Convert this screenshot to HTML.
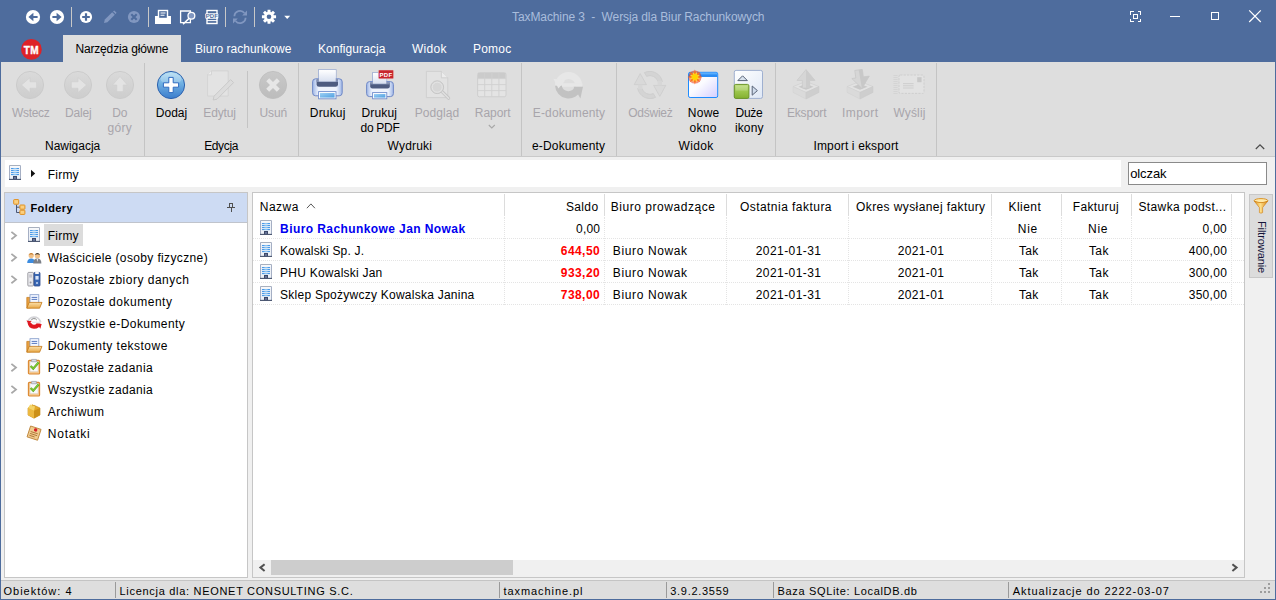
<!DOCTYPE html>
<html lang="pl"><head><meta charset="utf-8"><title>TaxMachine 3 - Wersja dla Biur Rachunkowych</title>
<style>
html,body{margin:0;padding:0;}
body{width:1276px;height:600px;position:relative;overflow:hidden;background:#f0f0f0;font-family:'Liberation Sans', sans-serif;}
#app div,#app svg,#app span.t{position:absolute;}
#app span.t{white-space:pre;}
#app{position:absolute;left:0;top:0;width:1276px;height:600px;overflow:hidden;}
</style></head><body><div id="app">
<div style="left:0px;top:0px;width:1276px;height:600px;background:#4e6c9d;"></div>
<div style="left:1px;top:62px;width:1274px;height:95px;background:#dedede;"></div>
<div style="left:1px;top:156px;width:1274px;height:1px;background:#c9c9c9;"></div>
<div style="left:1px;top:157px;width:1274px;height:423px;background:#f0f0f0;"></div>
<div style="left:63px;top:35px;width:118px;height:27px;background:#dedede;"></div>
<div style="left:144px;top:63px;width:1px;height:93px;background:#c4c4c4;"></div>
<div style="left:298px;top:63px;width:1px;height:93px;background:#c4c4c4;"></div>
<div style="left:521px;top:63px;width:1px;height:93px;background:#c4c4c4;"></div>
<div style="left:616px;top:63px;width:1px;height:93px;background:#c4c4c4;"></div>
<div style="left:775px;top:63px;width:1px;height:93px;background:#c4c4c4;"></div>
<div style="left:936px;top:63px;width:1px;height:93px;background:#c4c4c4;"></div>
<div style="left:247px;top:71px;width:1px;height:57px;background:#c4c4c4;"></div>
<div style="left:5px;top:160px;width:1116px;height:27px;background:#ffffff;"></div>
<div style="left:1128px;top:162px;width:139px;height:23px;background:#ffffff;box-sizing:border-box;border:1px solid #8a8a8a;"></div>
<div style="left:4px;top:192px;width:244px;height:386px;background:#ffffff;box-sizing:border-box;border:1px solid #c6c6c6;"></div>
<div style="left:5px;top:193px;width:242px;height:29px;background:#cddbf3;"></div>
<div style="left:5px;top:222px;width:242px;height:1px;background:#c0c4cc;"></div>
<div style="left:44px;top:224px;width:39px;height:22px;background:#dcdcdc;"></div>
<div style="left:252px;top:192px;width:993px;height:386px;background:#ffffff;box-sizing:border-box;border:1px solid #c6c6c6;"></div>
<div style="left:504px;top:194px;width:1px;height:22px;background:#dcdcdc;"></div>
<div style="left:504px;top:217px;width:1px;height:88px;background:none;border-left:1px dotted #e4e4e4;"></div>
<div style="left:604px;top:194px;width:1px;height:22px;background:#dcdcdc;"></div>
<div style="left:604px;top:217px;width:1px;height:88px;background:none;border-left:1px dotted #e4e4e4;"></div>
<div style="left:726px;top:194px;width:1px;height:22px;background:#dcdcdc;"></div>
<div style="left:726px;top:217px;width:1px;height:88px;background:none;border-left:1px dotted #e4e4e4;"></div>
<div style="left:848px;top:194px;width:1px;height:22px;background:#dcdcdc;"></div>
<div style="left:848px;top:217px;width:1px;height:88px;background:none;border-left:1px dotted #e4e4e4;"></div>
<div style="left:991px;top:194px;width:1px;height:22px;background:#dcdcdc;"></div>
<div style="left:991px;top:217px;width:1px;height:88px;background:none;border-left:1px dotted #e4e4e4;"></div>
<div style="left:1061px;top:194px;width:1px;height:22px;background:#dcdcdc;"></div>
<div style="left:1061px;top:217px;width:1px;height:88px;background:none;border-left:1px dotted #e4e4e4;"></div>
<div style="left:1131px;top:194px;width:1px;height:22px;background:#dcdcdc;"></div>
<div style="left:1131px;top:217px;width:1px;height:88px;background:none;border-left:1px dotted #e4e4e4;"></div>
<div style="left:1231px;top:194px;width:1px;height:22px;background:#dcdcdc;"></div>
<div style="left:1231px;top:217px;width:1px;height:88px;background:none;border-left:1px dotted #e4e4e4;"></div>
<div style="left:253px;top:238px;width:991px;height:1px;background:none;border-top:1px dotted #e4e4e4;"></div>
<div style="left:253px;top:260px;width:991px;height:1px;background:none;border-top:1px dotted #e4e4e4;"></div>
<div style="left:253px;top:282px;width:991px;height:1px;background:none;border-top:1px dotted #e4e4e4;"></div>
<div style="left:253px;top:304px;width:991px;height:1px;background:none;border-top:1px dotted #e4e4e4;"></div>
<div style="left:253px;top:560px;width:991px;height:17px;background:#f0f0f0;"></div>
<div style="left:271px;top:560px;width:242px;height:15px;background:#cdcdcd;"></div>
<div style="left:1249px;top:194px;width:24px;height:84px;background:#dcdcdc;box-sizing:border-box;border:1px solid #c8c8c8;"></div>
<div style="left:1px;top:580px;width:1274px;height:1px;background:#c4c4c4;"></div>
<div style="left:1px;top:581px;width:1274px;height:18px;background:#dedede;"></div>
<div style="left:115px;top:582px;width:1px;height:16px;background:#9a9a9a;"></div>
<div style="left:499px;top:582px;width:1px;height:16px;background:#9a9a9a;"></div>
<div style="left:666px;top:582px;width:1px;height:16px;background:#9a9a9a;"></div>
<div style="left:773px;top:582px;width:1px;height:16px;background:#9a9a9a;"></div>
<div style="left:1008px;top:582px;width:1px;height:16px;background:#9a9a9a;"></div>
<div style="left:71px;top:7px;width:1px;height:20px;background:#c8c8c8;"></div>
<div style="left:148px;top:7px;width:1px;height:20px;background:#c8c8c8;"></div>
<div style="left:225px;top:7px;width:1px;height:20px;background:#c8c8c8;"></div>
<div style="left:254px;top:7px;width:1px;height:20px;background:#c8c8c8;"></div>
<div style="left:1170px;top:16px;width:10px;height:1px;background:#ffffff;"></div>
<div style="left:1211px;top:12px;width:8px;height:8px;background:none;box-sizing:border-box;border:1px solid #ffffff;"></div>
<svg style="left:25px;top:9px;" width="16" height="16" viewBox="0 0 16 16"><circle cx="8" cy="8" r="7.1" fill="#ffffff"/><path d="M3.4 8L8.4 3.8V6.9H12.6V9.1H8.4V12.2Z" fill="#4e6c9d"/></svg>
<svg style="left:49px;top:9px;" width="16" height="16" viewBox="0 0 16 16"><circle cx="8" cy="8" r="7.1" fill="#ffffff"/><path d="M12.6 8L7.6 3.8V6.9H3.4V9.1H7.6V12.2Z" fill="#4e6c9d"/></svg>
<svg style="left:79px;top:10px;" width="14" height="14" viewBox="0 0 14 14"><circle cx="7" cy="7" r="6.1" fill="#ffffff"/><path d="M7 3.2V10.8M3.2 7H10.8" stroke="#4e6c9d" stroke-width="2.2"/></svg>
<svg style="left:103px;top:10px;" width="14" height="14" viewBox="0 0 14 14"><path d="M9.2 2.2L11.8 4.8L4.4 12.2L1 13L1.8 9.6Z" fill="#8197c0"/><path d="M10 1.4L11.2 0.4L13.6 2.8L12.6 4Z" fill="#8197c0"/></svg>
<svg style="left:127px;top:10px;" width="14" height="14" viewBox="0 0 14 14"><circle cx="7" cy="7" r="6.1" fill="#8197c0"/><path d="M4.3 4.3L9.7 9.7M9.7 4.3L4.3 9.7" stroke="#4e6c9d" stroke-width="2.1"/></svg>
<svg style="left:154px;top:9px;" width="18" height="16" viewBox="0 0 18 16"><rect x="1" y="7" width="16" height="8" fill="#ffffff"/><rect x="4.5" y="1.5" width="9" height="8" fill="#4e6c9d" stroke="#ffffff" stroke-width="1.4"/><path d="M6.5 4H11.5M6.5 6.2H10.5" stroke="#ffffff" stroke-width="1.1"/></svg>
<svg style="left:179px;top:9px;" width="18" height="16" viewBox="0 0 18 16"><path d="M1.6 2H11.4V13.6H1.6Z" fill="none" stroke="#ffffff" stroke-width="1.3"/><circle cx="12.4" cy="6.8" r="3.4" fill="#8197c0" stroke="#ffffff" stroke-width="1.3"/><path d="M10 9.4L4 15.2" stroke="#ffffff" stroke-width="1.5"/></svg>
<svg style="left:204px;top:9px;" width="16" height="16" viewBox="0 0 16 16"><rect x="3" y="1.5" width="10" height="13" fill="none" stroke="#ffffff" stroke-width="1.4"/><rect x="1.3" y="4.2" width="13" height="5.6" rx="1" fill="#ffffff"/><text x="7.8" y="9.2" font-family="Liberation Sans, sans-serif" font-size="6" font-weight="700" fill="#4e6c9d" text-anchor="middle" style="text-rendering:geometricPrecision">PDF</text><path d="M3 11.6H13" stroke="#ffffff" stroke-width="1"/></svg>
<svg style="left:232px;top:9px;" width="16" height="16" viewBox="0 0 16 16"><path d="M2.4 7.2A5.6 5.6 0 0 1 12.4 4" fill="none" stroke="#8197c0" stroke-width="1.8"/><path d="M13.6 8.8A5.6 5.6 0 0 1 3.6 12" fill="none" stroke="#8197c0" stroke-width="1.8"/><path d="M15 1.6V6.4H10.2Z" fill="#8197c0"/><path d="M1 14.4V9.6H5.8Z" fill="#8197c0"/></svg>
<svg style="left:261px;top:9px;" width="16" height="16" viewBox="0 0 16 16"><path d="M15.06 6.37L15.06 9.23L12.75 9.37L12.47 10.04L14.00 11.78L11.98 13.80L10.24 12.27L9.57 12.55L9.43 14.86L6.57 14.86L6.43 12.55L5.76 12.27L4.02 13.80L2.00 11.78L3.53 10.04L3.25 9.37L0.94 9.23L0.94 6.37L3.25 6.23L3.53 5.56L2.00 3.82L4.02 1.80L5.76 3.33L6.43 3.05L6.57 0.74L9.43 0.74L9.57 3.05L10.24 3.33L11.98 1.80L14.00 3.82L12.47 5.56L12.75 6.23Z" fill="#ffffff"/><circle cx="8" cy="7.8" r="2.3" fill="#4e6c9d"/></svg>
<svg style="left:284px;top:15px;" width="7" height="5" viewBox="0 0 7 5"><path d="M0.2 0.8H6.2L3.2 4Z" fill="#ffffff"/></svg>
<svg style="left:20px;top:38px;" width="23" height="23" viewBox="0 0 23 23"><circle cx="11.4" cy="11.4" r="10.4" fill="#de2228"/><text x="11.4" y="15.5" font-family="Liberation Sans, sans-serif" font-size="10" font-weight="700" fill="#fff" text-anchor="middle" letter-spacing="0.4" stroke="#fff" stroke-width="0.35">TM</text></svg>
<svg style="left:1129px;top:10px;" width="13" height="13" viewBox="0 0 13 13"><path shape-rendering="crispEdges" d="M1.5 4.5V1.5H4.5M8.5 1.5H11.5V4.5M11.5 8.5V11.5H8.5M4.5 11.5H1.5V8.5" fill="none" stroke="#ffffff" stroke-width="1"/><rect shape-rendering="crispEdges" x="4.5" y="4.5" width="4" height="4" fill="none" stroke="#ffffff" stroke-width="1"/></svg>
<svg style="left:1248px;top:9px;" width="14" height="14" viewBox="0 0 14 14"><path d="M1.2 1.4L12.8 13M12.8 1.4L1.2 13" stroke="#ffffff" stroke-width="1.2"/></svg>
<svg width="0" height="0" style="left:0;top:0"><defs>
<linearGradient id="gDis" x1="0" y1="0" x2="0" y2="1"><stop offset="0" stop-color="#dadada"/><stop offset="1" stop-color="#cdcdcd"/></linearGradient>
<linearGradient id="gDis2" x1="0" y1="0" x2="0" y2="1"><stop offset="0" stop-color="#c9c9c9"/><stop offset="1" stop-color="#bcbcbc"/></linearGradient>
<linearGradient id="gAdd" x1="0" y1="0" x2="0" y2="1"><stop offset="0" stop-color="#b4def2"/><stop offset="0.4" stop-color="#74b4e4"/><stop offset="1" stop-color="#3a7ccc"/></linearGradient>
<linearGradient id="gPrn" x1="0" y1="0" x2="1" y2="0"><stop offset="0" stop-color="#9fb6e6"/><stop offset="0.2" stop-color="#eef3fc"/><stop offset="0.8" stop-color="#eef3fc"/><stop offset="1" stop-color="#9fb6e6"/></linearGradient>
<linearGradient id="gPap" x1="0" y1="0" x2="0" y2="1"><stop offset="0" stop-color="#ffffff"/><stop offset="1" stop-color="#d8e0f0"/></linearGradient>
<linearGradient id="gTray" x1="0" y1="0" x2="1" y2="1"><stop offset="0" stop-color="#9ed0f4"/><stop offset="1" stop-color="#4f9fe0"/></linearGradient>
<linearGradient id="gWin" x1="0" y1="0" x2="1" y2="1"><stop offset="0" stop-color="#ffffff"/><stop offset="0.45" stop-color="#fbfbff"/><stop offset="1" stop-color="#d4ceff"/></linearGradient>
<linearGradient id="gGreen" x1="0" y1="0" x2="0" y2="1"><stop offset="0" stop-color="#bcdc7c"/><stop offset="0.5" stop-color="#9cc64c"/><stop offset="1" stop-color="#84b030"/></linearGradient>
<linearGradient id="gBig" x1="0" y1="0" x2="1" y2="1"><stop offset="0" stop-color="#ffffff"/><stop offset="1" stop-color="#dfe8f6"/></linearGradient>
<radialGradient id="gStar"><stop offset="0" stop-color="#ffe000"/><stop offset="0.35" stop-color="#ffc400"/><stop offset="0.6" stop-color="#f05a18"/><stop offset="1" stop-color="#e03020" stop-opacity="0.55"/></radialGradient>
<linearGradient id="gBld" x1="0" y1="0" x2="1" y2="0"><stop offset="0" stop-color="#c8d4e4"/><stop offset="0.5" stop-color="#f4f8fc"/><stop offset="1" stop-color="#b8c4d8"/></linearGradient>
<linearGradient id="gFold" x1="0" y1="0" x2="0" y2="1"><stop offset="0" stop-color="#fbe0a8"/><stop offset="1" stop-color="#e8a848"/></linearGradient>
<linearGradient id="gFun" x1="0" y1="0" x2="1" y2="0"><stop offset="0" stop-color="#e09018"/><stop offset="0.45" stop-color="#ffe08a"/><stop offset="1" stop-color="#d88410"/></linearGradient>
</defs></svg>
<svg style="left:15px;top:70px;" width="30" height="30" viewBox="0 0 30 30"><circle cx="15" cy="15" r="13.6" fill="url(#gDis)" stroke="#c9c9c9" stroke-width="0.9"/><path d="M6.5 15L15 7.6V11.8H21.6V18.2H15V22.4Z" fill="#e3e3e3" stroke="#cfcfcf" stroke-width="0.6"/></svg>
<svg style="left:63px;top:70px;" width="30" height="30" viewBox="0 0 30 30"><circle cx="15" cy="15" r="13.6" fill="url(#gDis)" stroke="#c9c9c9" stroke-width="0.9"/><path d="M23.5 15L15 7.6V11.8H8.4V18.2H15V22.4Z" fill="#e3e3e3" stroke="#cfcfcf" stroke-width="0.6"/></svg>
<svg style="left:105px;top:70px;" width="30" height="30" viewBox="0 0 30 30"><circle cx="15" cy="15" r="13.6" fill="url(#gDis)" stroke="#c9c9c9" stroke-width="0.9"/><path d="M15 6.5L22.4 15H18.2V21.6H11.8V15H7.6Z" fill="#e3e3e3" stroke="#cfcfcf" stroke-width="0.6"/></svg>
<svg style="left:156px;top:70px;" width="30" height="30" viewBox="0 0 30 30"><circle cx="15" cy="15" r="13.6" fill="url(#gAdd)" stroke="#2d62ae" stroke-width="1"/><ellipse cx="15" cy="9" rx="10.5" ry="6" fill="#ffffff" opacity="0.22"/><path d="M12.8 7.4H17.2V12.8H22.6V17.2H17.2V22.6H12.8V17.2H7.4V12.8H12.8Z" fill="#ffffff" stroke="#2f6cc0" stroke-width="1" stroke-linejoin="round"/></svg>
<svg style="left:205px;top:69px;" width="32" height="32" viewBox="0 0 32 32"><path d="M6.5 1.8H23.2V27H2.6V5.8Z" fill="#e3e3e3" stroke="#d0d0d0" stroke-width="0.8"/><path d="M6.5 1.8V5.8H2.6" fill="#ececec" stroke="#d0d0d0" stroke-width="0.8"/><path d="M25.6 10.6L28.6 13.6L12 30.2L8.2 31L9 27.2Z" fill="#dcdcdc" stroke="#c4c4c4" stroke-width="0.8"/></svg>
<svg style="left:258px;top:70px;" width="30" height="30" viewBox="0 0 30 30"><circle cx="15" cy="15" r="13.6" fill="url(#gDis2)" stroke="#bdbdbd" stroke-width="0.8"/><path d="M8.2 11.2L11.2 8.2L15 12L18.8 8.2L21.8 11.2L18 15L21.8 18.8L18.8 21.8L15 18L11.2 21.8L8.2 18.8L12 15Z" fill="#e6e6e6"/></svg>
<svg style="left:311.5px;top:69px;" width="31" height="31" viewBox="0 0 31 31"><rect x="6.5" y="0.7" width="17.6" height="13" fill="url(#gPap)" stroke="#9aaad0" stroke-width="0.9"/><rect x="0.6" y="9.8" width="29.6" height="17" rx="3" fill="url(#gPrn)" stroke="#6f88c6" stroke-width="1"/><path d="M4.6 10.6H26V15.4Q26 17.8 23.6 17.8H7Q4.6 17.8 4.6 15.4Z" fill="#4e5c80"/><path d="M4.6 10.6H26V13H4.6Z" fill="#8391b4"/><rect x="6.9" y="1.1" width="16.8" height="11.4" fill="url(#gPap)"/><rect x="6.6" y="22.6" width="17.4" height="7.2" fill="#ffffff" stroke="#6f8ccc" stroke-width="0.9"/><rect x="8" y="24" width="14.6" height="4.6" fill="url(#gTray)"/></svg>
<svg style="left:365.7px;top:69px;" width="29" height="31" viewBox="0 0 29 31"><rect x="6.5" y="3.7" width="14.2" height="12" fill="url(#gPap)" stroke="#9aaad0" stroke-width="0.9"/><rect x="0.6" y="12.6" width="26.8" height="15" rx="3" fill="url(#gPrn)" stroke="#6f88c6" stroke-width="1"/><path d="M4.2 13.4H23.8V17.2Q23.8 19.4 21.6 19.4H6.4Q4.2 19.4 4.2 17.2Z" fill="#4e5c80"/><path d="M4.2 13.4H23.8V15.4H4.2Z" fill="#8391b4"/><rect x="6.9" y="4.1" width="13.4" height="10.6" fill="url(#gPap)"/><rect x="6.6" y="23.6" width="14.2" height="6.2" fill="#ffffff" stroke="#6f8ccc" stroke-width="0.9"/><rect x="8" y="25" width="11.4" height="3.6" fill="url(#gTray)"/><rect x="12.4" y="1" width="15.2" height="8.8" rx="1" fill="#c8262c" stroke="#e8d0d0" stroke-width="0.5"/><text x="20" y="8" font-family="Liberation Sans, sans-serif" font-size="6" font-weight="700" fill="#ffffff" text-anchor="middle" letter-spacing="0.4">PDF</text></svg>
<svg style="left:425px;top:70px;" width="26" height="31" viewBox="0 0 26 31"><path d="M1.4 1.4H16.4L22.8 7.8V27.6H1.4Z" fill="#e2e2e2" stroke="#cecece" stroke-width="0.9"/><path d="M16.4 1.4V7.8H22.8" fill="#ececec" stroke="#cecece" stroke-width="0.9"/><path d="M16.6 21.2L23.6 28.2" stroke="#c4c4c4" stroke-width="3.2" stroke-linecap="round"/><path d="M16.6 21.2L23.6 28.2" stroke="#e0e0e0" stroke-width="1.6" stroke-linecap="round"/><circle cx="12.2" cy="17.2" r="6.4" fill="#dadada" stroke="#c6c6c6" stroke-width="1"/><circle cx="12.2" cy="17.2" r="5" fill="#d6d6d6" stroke="#e4e4e4" stroke-width="1"/></svg>
<svg style="left:477px;top:72px;" width="30" height="26" viewBox="0 0 30 26"><rect x="0.6" y="0.6" width="28.4" height="24.2" rx="1.8" fill="#e4e4e4" stroke="#cdcdcd" stroke-width="0.9"/><path d="M1 1H28.6V6.4H1Z" fill="#cbcbcb"/><path d="M7.7 0.6V24.8" stroke="#d0d0d0" stroke-width="0.9"/><path d="M14.8 0.6V24.8" stroke="#d0d0d0" stroke-width="0.9"/><path d="M21.9 0.6V24.8" stroke="#d0d0d0" stroke-width="0.9"/><path d="M0.6 6.6H29" stroke="#d0d0d0" stroke-width="0.9"/><path d="M0.6 12.6H29" stroke="#d0d0d0" stroke-width="0.9"/><path d="M0.6 18.6H29" stroke="#d0d0d0" stroke-width="0.9"/></svg>
<svg style="left:488px;top:124px;" width="8" height="6" viewBox="0 0 8 6"><path d="M0.8 1L3.8 4L6.8 1" fill="none" stroke="#a8a8a8" stroke-width="1.1"/></svg>
<svg style="left:553px;top:69px;" width="32" height="31" viewBox="0 0 32 31"><path d="M2 16.6A13.6 13.6 0 0 0 28.2 21L22.4 17.6H21.6A6.6 6.6 0 0 1 8.8 16.6Z" fill="#c2c2c2"/><path d="M2 16.6A13.6 13.6 0 0 1 29.2 16.6L22.2 16.6A6.6 6.6 0 0 0 8.8 16.6Z" fill="#e7e7e7"/><path d="M9 14.2H29.4V17.8H9Z" fill="#e7e7e7"/><path d="M0.4 9.8L5.4 19.4L12.2 11.4Z" fill="#e7e7e7"/><path d="M20.6 17.8H30L27.4 29.4Z" fill="#c2c2c2"/></svg>
<svg style="left:633px;top:71px;" width="34" height="28" viewBox="0 0 34 28"><path d="M9 17.5A8.4 8.4 0 0 0 20.4 22.6L22.6 26.4A12.8 12.8 0 0 1 4.6 17.5Z" fill="#d4d4d4" stroke="#c8c8c8" stroke-width="0.6"/><path d="M1.2 13.6L7.2 2.6L13.4 13.6Z" fill="#d9d9d9" stroke="#c8c8c8" stroke-width="0.6"/><path d="M5 13.6H9.4V18.2H5Z" fill="#d7d7d7"/><path d="M25 10.5A8.4 8.4 0 0 0 13.6 5.4L11.4 1.6A12.8 12.8 0 0 1 29.4 10.5Z" fill="#d4d4d4" stroke="#c8c8c8" stroke-width="0.6"/><path d="M32.8 14.4L26.8 25.4L20.6 14.4Z" fill="#d9d9d9" stroke="#c8c8c8" stroke-width="0.6"/><path d="M24.6 9.8H29V14.4H24.6Z" fill="#d7d7d7"/></svg>
<svg style="left:686px;top:69px;" width="34" height="31" viewBox="0 0 34 31"><rect x="2.5" y="3.3" width="29.2" height="25.2" rx="1.6" fill="url(#gWin)" stroke="#1e8cff" stroke-width="1"/><path d="M3 3.8H31.2V8H3Z" fill="#2a8cf4"/><path d="M3 3.8H31.2V5.4H3Z" fill="#5aaefc"/><circle cx="8.9" cy="8" r="6.6" fill="#e83820" opacity="0.55"/><path transform="translate(8.9 8)" d="M0 -7.4L1.3 -3.1L5.2 -5.2L3.1 -1.3L7.4 0L3.1 1.3L5.2 5.2L1.3 3.1L0 7.4L-1.3 3.1L-5.2 5.2L-3.1 1.3L-7.4 0L-3.1 -1.3L-5.2 -5.2L-1.3 -3.1Z" fill="#ff7818"/><path transform="translate(8.9 8) rotate(22.5) scale(0.8)" d="M0 -7.4L1.3 -3.1L5.2 -5.2L3.1 -1.3L7.4 0L3.1 1.3L5.2 5.2L1.3 3.1L0 7.4L-1.3 3.1L-5.2 5.2L-3.1 1.3L-7.4 0L-3.1 -1.3L-5.2 -5.2L-1.3 -3.1Z" fill="#ffd040"/><circle cx="8.9" cy="8" r="3" fill="#ffd400"/></svg>
<svg style="left:733px;top:69px;" width="31" height="31" viewBox="0 0 31 31"><rect x="1.3" y="1.4" width="28.2" height="28" rx="1.8" fill="url(#gBig)" stroke="#9fb0d0" stroke-width="1"/><path d="M4.8 11.6L9.6 6.8L14.4 11.6Z" fill="#d8e2ee" stroke="#596478" stroke-width="1"/><path d="M19.2 17L24.4 21.6L19.2 26.2Z" fill="#d0dcec" stroke="#596478" stroke-width="1"/><rect x="1.3" y="15.4" width="14.6" height="14" rx="1.4" fill="url(#gGreen)" stroke="#6c9428" stroke-width="1"/><path d="M2.6 16.6H14.6V21.6H2.6Z" fill="#ffffff" opacity="0.18"/></svg>
<svg style="left:792px;top:69px;" width="28" height="31" viewBox="0 0 28 31"><path d="M1 17.6L14 12.4L27 17.6L14 23.4Z" fill="#e2e2e2" stroke="#d0d0d0" stroke-width="0.7"/><path d="M1 17.6V23.4L14 30V23.4Z" fill="#dadada" stroke="#d0d0d0" stroke-width="0.5"/><path d="M27 17.6V23.4L14 30V23.4Z" fill="#cecece" stroke="#c8c8c8" stroke-width="0.5"/><path d="M6.5 17.8L14 15L21.5 17.8L14 20.8Z" fill="#c8c8c8"/><path d="M14 0.6L23 11.4H17.6V19H10.4V11.4H5Z" fill="#d6d6d6" stroke="#c8c8c8" stroke-width="0.7"/><path d="M14 0.6L23 11.4H17.6V19H14Z" fill="#cccccc"/></svg>
<svg style="left:846px;top:69px;" width="28" height="31" viewBox="0 0 28 31"><path d="M1 17.6L14 12.4L27 17.6L14 23.4Z" fill="#e2e2e2" stroke="#d0d0d0" stroke-width="0.7"/><path d="M1 17.6V23.4L14 30V23.4Z" fill="#dadada" stroke="#d0d0d0" stroke-width="0.5"/><path d="M27 17.6V23.4L14 30V23.4Z" fill="#cecece" stroke="#c8c8c8" stroke-width="0.5"/><path d="M6.5 17.8L14 15L21.5 17.8L14 20.8Z" fill="#c8c8c8"/><path d="M10 0.8H17.6V8.4H23.6L14.6 19.6L6 8.4H10Z" fill="#d6d6d6" stroke="#c6c6c6" stroke-width="0.7" transform="rotate(-8 14 10)"/><path d="M14 0.8H17.6V8.4H23.6L14.6 19.6Z" fill="#c8c8c8" transform="rotate(-8 14 10)"/></svg>
<svg style="left:893px;top:74px;" width="32" height="21" viewBox="0 0 32 21"><rect x="6" y="1" width="25" height="18.4" rx="1.2" fill="#e2e2e2" stroke="#cccccc" stroke-width="0.9" stroke-dasharray="2.2 1.2"/><rect x="24.2" y="3.2" width="4.4" height="5" fill="#c8c8c8"/><path d="M10 9.6H20.6" stroke="#cccccc" stroke-width="0.9"/><path d="M10 11.8H20.6" stroke="#cccccc" stroke-width="0.9"/><path d="M10 14H20.6" stroke="#cccccc" stroke-width="0.9"/><path d="M0.4 1.5H4.6" stroke="#d2d2d2" stroke-width="0.8"/><path d="M0.4 3.5H4.6" stroke="#d2d2d2" stroke-width="0.8"/><path d="M0.4 5.5H4.6" stroke="#d2d2d2" stroke-width="0.8"/><path d="M0.4 7.5H4.6" stroke="#d2d2d2" stroke-width="0.8"/><path d="M0.4 9.5H4.6" stroke="#d2d2d2" stroke-width="0.8"/><path d="M0.4 11.5H4.6" stroke="#d2d2d2" stroke-width="0.8"/><path d="M0.4 13.5H4.6" stroke="#d2d2d2" stroke-width="0.8"/><path d="M0.4 15.5H4.6" stroke="#d2d2d2" stroke-width="0.8"/><path d="M0.4 17.5H4.6" stroke="#d2d2d2" stroke-width="0.8"/><path d="M0.4 19.5H4.6" stroke="#d2d2d2" stroke-width="0.8"/></svg>
<svg style="left:1255px;top:144px;" width="10" height="6" viewBox="0 0 10 6"><path d="M0.8 5L5 0.9L9.2 5" fill="none" stroke="#4a4a4a" stroke-width="1.2"/></svg>
<svg style="left:9px;top:165px;" width="12" height="15" viewBox="0 0 12 15"><rect x="0.5" y="0.8" width="11" height="13.8" fill="#edf1f7" stroke="#9ca7be" stroke-width="0.9"/><path d="M0.8 0.5H11.2" stroke="#a8b0be" stroke-width="1"/><path d="M1 1.2H11V2.4H1Z" fill="#ffffff"/><rect x="2" y="3" width="8" height="1.1" fill="#4b9ae8"/><rect x="4.4" y="3" width="3.2" height="1.1" fill="#8cc4f4"/><rect x="2" y="5" width="8" height="1.1" fill="#4b9ae8"/><rect x="4.4" y="5" width="3.2" height="1.1" fill="#8cc4f4"/><rect x="2" y="7" width="8" height="1.1" fill="#4b9ae8"/><rect x="4.4" y="7" width="3.2" height="1.1" fill="#8cc4f4"/><rect x="2" y="9" width="8" height="1.1" fill="#4b9ae8"/><rect x="4.4" y="9" width="3.2" height="1.1" fill="#8cc4f4"/><rect x="4" y="11" width="4" height="3.6" fill="#3c4868"/><rect x="5" y="12" width="2" height="2" fill="#66749a"/><path d="M0 14.4H12" stroke="#4a5670" stroke-width="1.1"/></svg>
<svg style="left:28px;top:227px;" width="12" height="15" viewBox="0 0 12 15"><rect x="0.5" y="0.8" width="11" height="13.8" fill="#edf1f7" stroke="#9ca7be" stroke-width="0.9"/><path d="M0.8 0.5H11.2" stroke="#a8b0be" stroke-width="1"/><path d="M1 1.2H11V2.4H1Z" fill="#ffffff"/><rect x="2" y="3" width="8" height="1.1" fill="#4b9ae8"/><rect x="4.4" y="3" width="3.2" height="1.1" fill="#8cc4f4"/><rect x="2" y="5" width="8" height="1.1" fill="#4b9ae8"/><rect x="4.4" y="5" width="3.2" height="1.1" fill="#8cc4f4"/><rect x="2" y="7" width="8" height="1.1" fill="#4b9ae8"/><rect x="4.4" y="7" width="3.2" height="1.1" fill="#8cc4f4"/><rect x="2" y="9" width="8" height="1.1" fill="#4b9ae8"/><rect x="4.4" y="9" width="3.2" height="1.1" fill="#8cc4f4"/><rect x="4" y="11" width="4" height="3.6" fill="#3c4868"/><rect x="5" y="12" width="2" height="2" fill="#66749a"/><path d="M0 14.4H12" stroke="#4a5670" stroke-width="1.1"/></svg>
<svg style="left:260px;top:220px;" width="12" height="15" viewBox="0 0 12 15"><rect x="0.5" y="0.8" width="11" height="13.8" fill="#edf1f7" stroke="#9ca7be" stroke-width="0.9"/><path d="M0.8 0.5H11.2" stroke="#a8b0be" stroke-width="1"/><path d="M1 1.2H11V2.4H1Z" fill="#ffffff"/><rect x="2" y="3" width="8" height="1.1" fill="#4b9ae8"/><rect x="4.4" y="3" width="3.2" height="1.1" fill="#8cc4f4"/><rect x="2" y="5" width="8" height="1.1" fill="#4b9ae8"/><rect x="4.4" y="5" width="3.2" height="1.1" fill="#8cc4f4"/><rect x="2" y="7" width="8" height="1.1" fill="#4b9ae8"/><rect x="4.4" y="7" width="3.2" height="1.1" fill="#8cc4f4"/><rect x="2" y="9" width="8" height="1.1" fill="#4b9ae8"/><rect x="4.4" y="9" width="3.2" height="1.1" fill="#8cc4f4"/><rect x="4" y="11" width="4" height="3.6" fill="#3c4868"/><rect x="5" y="12" width="2" height="2" fill="#66749a"/><path d="M0 14.4H12" stroke="#4a5670" stroke-width="1.1"/></svg>
<svg style="left:260px;top:242px;" width="12" height="15" viewBox="0 0 12 15"><rect x="0.5" y="0.8" width="11" height="13.8" fill="#edf1f7" stroke="#9ca7be" stroke-width="0.9"/><path d="M0.8 0.5H11.2" stroke="#a8b0be" stroke-width="1"/><path d="M1 1.2H11V2.4H1Z" fill="#ffffff"/><rect x="2" y="3" width="8" height="1.1" fill="#4b9ae8"/><rect x="4.4" y="3" width="3.2" height="1.1" fill="#8cc4f4"/><rect x="2" y="5" width="8" height="1.1" fill="#4b9ae8"/><rect x="4.4" y="5" width="3.2" height="1.1" fill="#8cc4f4"/><rect x="2" y="7" width="8" height="1.1" fill="#4b9ae8"/><rect x="4.4" y="7" width="3.2" height="1.1" fill="#8cc4f4"/><rect x="2" y="9" width="8" height="1.1" fill="#4b9ae8"/><rect x="4.4" y="9" width="3.2" height="1.1" fill="#8cc4f4"/><rect x="4" y="11" width="4" height="3.6" fill="#3c4868"/><rect x="5" y="12" width="2" height="2" fill="#66749a"/><path d="M0 14.4H12" stroke="#4a5670" stroke-width="1.1"/></svg>
<svg style="left:260px;top:264px;" width="12" height="15" viewBox="0 0 12 15"><rect x="0.5" y="0.8" width="11" height="13.8" fill="#edf1f7" stroke="#9ca7be" stroke-width="0.9"/><path d="M0.8 0.5H11.2" stroke="#a8b0be" stroke-width="1"/><path d="M1 1.2H11V2.4H1Z" fill="#ffffff"/><rect x="2" y="3" width="8" height="1.1" fill="#4b9ae8"/><rect x="4.4" y="3" width="3.2" height="1.1" fill="#8cc4f4"/><rect x="2" y="5" width="8" height="1.1" fill="#4b9ae8"/><rect x="4.4" y="5" width="3.2" height="1.1" fill="#8cc4f4"/><rect x="2" y="7" width="8" height="1.1" fill="#4b9ae8"/><rect x="4.4" y="7" width="3.2" height="1.1" fill="#8cc4f4"/><rect x="2" y="9" width="8" height="1.1" fill="#4b9ae8"/><rect x="4.4" y="9" width="3.2" height="1.1" fill="#8cc4f4"/><rect x="4" y="11" width="4" height="3.6" fill="#3c4868"/><rect x="5" y="12" width="2" height="2" fill="#66749a"/><path d="M0 14.4H12" stroke="#4a5670" stroke-width="1.1"/></svg>
<svg style="left:260px;top:286px;" width="12" height="15" viewBox="0 0 12 15"><rect x="0.5" y="0.8" width="11" height="13.8" fill="#edf1f7" stroke="#9ca7be" stroke-width="0.9"/><path d="M0.8 0.5H11.2" stroke="#a8b0be" stroke-width="1"/><path d="M1 1.2H11V2.4H1Z" fill="#ffffff"/><rect x="2" y="3" width="8" height="1.1" fill="#4b9ae8"/><rect x="4.4" y="3" width="3.2" height="1.1" fill="#8cc4f4"/><rect x="2" y="5" width="8" height="1.1" fill="#4b9ae8"/><rect x="4.4" y="5" width="3.2" height="1.1" fill="#8cc4f4"/><rect x="2" y="7" width="8" height="1.1" fill="#4b9ae8"/><rect x="4.4" y="7" width="3.2" height="1.1" fill="#8cc4f4"/><rect x="2" y="9" width="8" height="1.1" fill="#4b9ae8"/><rect x="4.4" y="9" width="3.2" height="1.1" fill="#8cc4f4"/><rect x="4" y="11" width="4" height="3.6" fill="#3c4868"/><rect x="5" y="12" width="2" height="2" fill="#66749a"/><path d="M0 14.4H12" stroke="#4a5670" stroke-width="1.1"/></svg>
<svg style="left:30px;top:169px;" width="6" height="9" viewBox="0 0 6 9"><path d="M1 0.8L5.2 4.5L1 8.2Z" fill="#111"/></svg>
<svg style="left:13px;top:199px;" width="13" height="16" viewBox="0 0 13 16"><path d="M3.5 5.4V13.5H7M3.5 8.2H7" fill="none" stroke="#4a5674" stroke-width="1"/><rect x="0.7" y="0.6" width="5" height="4.6" rx="0.6" fill="#fbd080" stroke="#e09020" stroke-width="1"/><rect x="6.9" y="6" width="5" height="4.2" rx="0.6" fill="#fbd080" stroke="#e09020" stroke-width="1"/><rect x="6.9" y="11.2" width="5" height="4.2" rx="0.6" fill="#fbd080" stroke="#e09020" stroke-width="1"/></svg>
<svg style="left:226px;top:202px;" width="10" height="11" viewBox="0 0 10 11"><path shape-rendering="crispEdges" d="M3 1.5H7M3.5 1.5V5.5M6.5 1.5V5.5M1 5.5H9M5 5.5V10" fill="none" stroke="#505050" stroke-width="1"/></svg>
<svg style="left:10px;top:231px;" width="8" height="10" viewBox="0 0 8 10"><path d="M1.4 0.9L6 4.6L1.4 8.3" fill="none" stroke="#a8a8a8" stroke-width="1.8"/></svg>
<svg style="left:10px;top:253px;" width="8" height="10" viewBox="0 0 8 10"><path d="M1.4 0.9L6 4.6L1.4 8.3" fill="none" stroke="#a8a8a8" stroke-width="1.8"/></svg>
<svg style="left:10px;top:275px;" width="8" height="10" viewBox="0 0 8 10"><path d="M1.4 0.9L6 4.6L1.4 8.3" fill="none" stroke="#a8a8a8" stroke-width="1.8"/></svg>
<svg style="left:10px;top:363px;" width="8" height="10" viewBox="0 0 8 10"><path d="M1.4 0.9L6 4.6L1.4 8.3" fill="none" stroke="#a8a8a8" stroke-width="1.8"/></svg>
<svg style="left:10px;top:385px;" width="8" height="10" viewBox="0 0 8 10"><path d="M1.4 0.9L6 4.6L1.4 8.3" fill="none" stroke="#a8a8a8" stroke-width="1.8"/></svg>
<svg style="left:27px;top:252px;" width="15" height="12" viewBox="0 0 15 12"><circle cx="4.2" cy="3.6" r="2.6" fill="#f0c088"/><path d="M1.6 2.8Q4.2 -0.8 6.8 2.8Q4.2 1.6 1.6 2.8Z" fill="#c07828"/><path d="M0.2 11Q0.2 6.4 4.2 6.4Q8 6.4 8 11Z" fill="#3c8ce0"/><circle cx="10.4" cy="3.8" r="2.7" fill="#f0c088"/><path d="M7.6 3Q10.4 -1 13.2 3Q10.4 1.6 7.6 3Z" fill="#333"/><path d="M6.2 11.4Q6.2 6.6 10.4 6.6Q14.4 6.6 14.4 11.4Z" fill="#7c8088"/><path d="M9.6 6.8L10.4 10L11.2 6.8Z" fill="#e8e8e8"/></svg>
<svg style="left:27px;top:271px;" width="14" height="16" viewBox="0 0 14 16"><rect x="0.8" y="1.4" width="5.6" height="13.6" rx="0.8" fill="#e8e8ec" stroke="#8a8a92" stroke-width="0.8"/><rect x="2.2" y="3.4" width="2.8" height="3.2" fill="#c4c4cc"/><circle cx="3.6" cy="11.6" r="1" fill="#9a9aa4"/><rect x="7" y="1.4" width="6" height="13.6" rx="0.8" fill="#3a68b4" stroke="#28488c" stroke-width="0.8"/><path d="M8.2 0.4H11.8V3H8.2Z" fill="#f4f4f8"/><rect x="8.4" y="5" width="3.2" height="3.6" fill="#d8e4f8"/><circle cx="10" cy="12" r="1" fill="#c8d8f4"/></svg>
<svg style="left:26px;top:294px;" width="17" height="15" viewBox="0 0 17 15"><path d="M0.8 3.4H4.4V13.8H0.8Z" fill="#e8a040" stroke="#c47818" stroke-width="0.7"/><rect x="4" y="0.7" width="8.8" height="9.6" fill="#f4f8ff" stroke="#8098c8" stroke-width="0.8"/><path d="M5.6 3.4H11.2M5.6 5.4H11.2" stroke="#5878c0" stroke-width="1"/><path d="M3.2 8.4H16L13.6 14.2H0.8Z" fill="url(#gFold)" stroke="#c47818" stroke-width="0.8"/></svg>
<svg style="left:26px;top:338px;" width="17" height="15" viewBox="0 0 17 15"><path d="M0.8 3.4H4.4V13.8H0.8Z" fill="#e8a040" stroke="#c47818" stroke-width="0.7"/><rect x="4" y="0.7" width="8.8" height="9.6" fill="#f4f8ff" stroke="#8098c8" stroke-width="0.8"/><path d="M5.6 3.4H11.2M5.6 5.4H11.2" stroke="#5878c0" stroke-width="1"/><path d="M3.2 8.4H16L13.6 14.2H0.8Z" fill="url(#gFold)" stroke="#c47818" stroke-width="0.8"/></svg>
<svg style="left:26px;top:315px;" width="16" height="15" viewBox="0 0 16 15"><path d="M1.6 8A6.6 6.6 0 0 0 14.6 8.4L10.6 8.2A3 3 0 0 1 5.2 8Z" fill="#e01820"/><path d="M1.6 8A6.6 6.6 0 0 1 14.6 7.2" fill="none" stroke="#d4d4d8" stroke-width="1.8"/><path d="M6 7.4H15" stroke="#e8e8ec" stroke-width="1.6"/><path d="M0.4 5.6L3 9.6L5.6 6.2Z" fill="#e01820"/><path d="M11 9H15.6L14.4 13.8Z" fill="#e01820"/><path d="M5 5.4A3.4 3.4 0 0 1 10.8 5" fill="none" stroke="#555" stroke-width="0.7"/></svg>
<svg style="left:27px;top:358px;" width="14" height="17" viewBox="0 0 14 17"><rect x="1.4" y="2.4" width="11.2" height="13.6" rx="1" fill="#f4c890" stroke="#dc8830" stroke-width="1.1"/><rect x="3" y="3.6" width="8" height="10.2" fill="#f8f8fc" stroke="#d4c0a8" stroke-width="0.4"/><path d="M4.6 1.4H9.4V3.8H4.6Z" fill="#d8dce4" stroke="#9098a8" stroke-width="0.6"/><path d="M3.6 8L6.2 10.6L11.8 4.2" fill="none" stroke="#58a818" stroke-width="2.2"/><path d="M3.6 8L6.2 10.6L11.8 4.2" fill="none" stroke="#98dc48" stroke-width="0.9"/></svg>
<svg style="left:27px;top:380px;" width="14" height="17" viewBox="0 0 14 17"><rect x="1.4" y="2.4" width="11.2" height="13.6" rx="1" fill="#f4c890" stroke="#dc8830" stroke-width="1.1"/><rect x="3" y="3.6" width="8" height="10.2" fill="#f8f8fc" stroke="#d4c0a8" stroke-width="0.4"/><path d="M4.6 1.4H9.4V3.8H4.6Z" fill="#d8dce4" stroke="#9098a8" stroke-width="0.6"/><path d="M3.6 8L6.2 10.6L11.8 4.2" fill="none" stroke="#58a818" stroke-width="2.2"/><path d="M3.6 8L6.2 10.6L11.8 4.2" fill="none" stroke="#98dc48" stroke-width="0.9"/></svg>
<svg style="left:27px;top:403px;" width="14" height="16" viewBox="0 0 14 16"><path d="M1 5L7 2.2L13 5V12L7 15.2L1 12Z" fill="#e4a828" stroke="#c08410" stroke-width="0.6"/><path d="M1 5L7 7.8V15.2L1 12Z" fill="#ecb840"/><path d="M13 5L7 7.8V15.2L13 12Z" fill="#cc9018"/><path d="M1 5L3.2 1.6L8 3.6L7 7.8Z" fill="#f4d468"/><path d="M4.6 0.8L7 2.6L5.6 3.4Z" fill="#e0a828"/></svg>
<svg style="left:26px;top:425px;" width="16" height="16" viewBox="0 0 16 16"><g transform="rotate(18 8 8)"><rect x="2.6" y="2.4" width="11" height="11.4" fill="#f0cc90" stroke="#c08840" stroke-width="0.9"/><path d="M4.4 7.6H11.8M4.4 9.6H11.8M4.4 11.6H9.8" stroke="#b07838" stroke-width="0.9"/><circle cx="8.6" cy="4.6" r="1.7" fill="#d82028"/></g></svg>
<svg style="left:306px;top:203px;" width="10" height="6" viewBox="0 0 10 6"><path d="M0.9 5.2L4.9 0.9L8.9 5.2" fill="none" stroke="#555" stroke-width="1"/></svg>
<svg style="left:258px;top:562px;" width="9" height="11" viewBox="0 0 9 11"><path d="M6.6 2.2L2.4 5.6L6.6 9" fill="none" stroke="#505050" stroke-width="2"/></svg>
<svg style="left:1230px;top:562px;" width="9" height="11" viewBox="0 0 9 11"><path d="M2.4 2.2L6.6 5.6L2.4 9" fill="none" stroke="#505050" stroke-width="2"/></svg>
<svg style="left:1253px;top:198px;" width="16" height="16" viewBox="0 0 16 16"><ellipse cx="8" cy="2.6" rx="6.8" ry="2" fill="#ffe9a8" stroke="#d88c18" stroke-width="0.9"/><path d="M1.2 3L6.4 9.6V14.6Q8 15.8 9.6 14.6V9.6L14.8 3Q8 6.4 1.2 3Z" fill="url(#gFun)" stroke="#cc7c10" stroke-width="0.6"/></svg>
<svg style="left:1260px;top:583px;" width="12" height="12" viewBox="0 0 12 12"><rect x="8" y="0" width="2" height="2" fill="#9d9d9d"/><rect x="8" y="4" width="2" height="2" fill="#9d9d9d"/><rect x="4" y="4" width="2" height="2" fill="#9d9d9d"/><rect x="8" y="8" width="2" height="2" fill="#9d9d9d"/><rect x="4" y="8" width="2" height="2" fill="#9d9d9d"/><rect x="0" y="8" width="2" height="2" fill="#9d9d9d"/></svg>
<span class="t" style="left:512.10px;top:8.84px;font:400 12px/16px 'Liberation Sans', sans-serif;color:#a9bddc;letter-spacing:-0.110px;">TaxMachine 3  -  Wersja dla Biur Rachunkowych</span>
<span class="t" style="left:75.40px;top:41.44px;font:400 12px/16px 'Liberation Sans', sans-serif;color:#000000;letter-spacing:-0.156px;">Narzędzia główne</span>
<span class="t" style="left:195.00px;top:41.44px;font:400 12px/16px 'Liberation Sans', sans-serif;color:#ffffff;letter-spacing:0.027px;">Biuro rachunkowe</span>
<span class="t" style="left:317.90px;top:41.44px;font:400 12px/16px 'Liberation Sans', sans-serif;color:#ffffff;letter-spacing:0.073px;">Konfiguracja</span>
<span class="t" style="left:412.00px;top:41.44px;font:400 12px/16px 'Liberation Sans', sans-serif;color:#ffffff;letter-spacing:0.291px;">Widok</span>
<span class="t" style="left:472.90px;top:41.44px;font:400 12px/16px 'Liberation Sans', sans-serif;color:#ffffff;letter-spacing:0.248px;">Pomoc</span>
<span class="t" style="left:12.00px;top:104.54px;font:400 12px/16px 'Liberation Sans', sans-serif;color:#a8a5ab;letter-spacing:-0.307px;">Wstecz</span>
<span class="t" style="left:65.00px;top:104.54px;font:400 12px/16px 'Liberation Sans', sans-serif;color:#a8a5ab;letter-spacing:-0.172px;">Dalej</span>
<span class="t" style="left:112.20px;top:104.54px;font:400 12px/16px 'Liberation Sans', sans-serif;color:#a8a5ab;letter-spacing:-0.022px;">Do</span>
<span class="t" style="left:107.50px;top:119.84px;font:400 12px/16px 'Liberation Sans', sans-serif;color:#a8a5ab;letter-spacing:0.339px;">góry</span>
<span class="t" style="left:155.80px;top:104.54px;font:400 12px/16px 'Liberation Sans', sans-serif;color:#000000;letter-spacing:0.008px;">Dodaj</span>
<span class="t" style="left:203.30px;top:104.54px;font:400 12px/16px 'Liberation Sans', sans-serif;color:#a8a5ab;letter-spacing:-0.143px;">Edytuj</span>
<span class="t" style="left:259.50px;top:104.54px;font:400 12px/16px 'Liberation Sans', sans-serif;color:#a8a5ab;letter-spacing:-0.079px;">Usuń</span>
<span class="t" style="left:309.80px;top:104.54px;font:400 12px/16px 'Liberation Sans', sans-serif;color:#000000;letter-spacing:0.169px;">Drukuj</span>
<span class="t" style="left:361.50px;top:104.54px;font:400 12px/16px 'Liberation Sans', sans-serif;color:#000000;letter-spacing:0.169px;">Drukuj</span>
<span class="t" style="left:360.50px;top:119.84px;font:400 12px/16px 'Liberation Sans', sans-serif;color:#000000;letter-spacing:-0.281px;">do PDF</span>
<span class="t" style="left:414.80px;top:104.54px;font:400 12px/16px 'Liberation Sans', sans-serif;color:#a8a5ab;letter-spacing:0.050px;">Podgląd</span>
<span class="t" style="left:474.80px;top:104.54px;font:400 12px/16px 'Liberation Sans', sans-serif;color:#a8a5ab;letter-spacing:-0.055px;">Raport</span>
<span class="t" style="left:532.80px;top:104.54px;font:400 12px/16px 'Liberation Sans', sans-serif;color:#a8a5ab;letter-spacing:0.154px;">E-dokumenty</span>
<span class="t" style="left:628.20px;top:104.54px;font:400 12px/16px 'Liberation Sans', sans-serif;color:#a8a5ab;letter-spacing:-0.245px;">Odśwież</span>
<span class="t" style="left:687.80px;top:104.54px;font:400 12px/16px 'Liberation Sans', sans-serif;color:#000000;letter-spacing:0.253px;">Nowe</span>
<span class="t" style="left:689.50px;top:119.84px;font:400 12px/16px 'Liberation Sans', sans-serif;color:#000000;letter-spacing:0.317px;">okno</span>
<span class="t" style="left:735.50px;top:104.54px;font:400 12px/16px 'Liberation Sans', sans-serif;color:#000000;letter-spacing:-0.254px;">Duże</span>
<span class="t" style="left:735.00px;top:119.84px;font:400 12px/16px 'Liberation Sans', sans-serif;color:#000000;letter-spacing:0.097px;">ikony</span>
<span class="t" style="left:787.00px;top:104.54px;font:400 12px/16px 'Liberation Sans', sans-serif;color:#a8a5ab;letter-spacing:-0.198px;">Eksport</span>
<span class="t" style="left:842.00px;top:104.54px;font:400 12px/16px 'Liberation Sans', sans-serif;color:#a8a5ab;letter-spacing:0.414px;">Import</span>
<span class="t" style="left:893.50px;top:104.54px;font:400 12px/16px 'Liberation Sans', sans-serif;color:#a8a5ab;letter-spacing:0.130px;">Wyślij</span>
<span class="t" style="left:45.00px;top:137.84px;font:400 12px/16px 'Liberation Sans', sans-serif;color:#000000;letter-spacing:-0.018px;">Nawigacja</span>
<span class="t" style="left:204.20px;top:137.84px;font:400 12px/16px 'Liberation Sans', sans-serif;color:#000000;letter-spacing:-0.372px;">Edycja</span>
<span class="t" style="left:387.50px;top:137.84px;font:400 12px/16px 'Liberation Sans', sans-serif;color:#000000;letter-spacing:0.209px;">Wydruki</span>
<span class="t" style="left:532.00px;top:137.84px;font:400 12px/16px 'Liberation Sans', sans-serif;color:#000000;letter-spacing:0.166px;">e-Dokumenty</span>
<span class="t" style="left:678.50px;top:137.84px;font:400 12px/16px 'Liberation Sans', sans-serif;color:#000000;letter-spacing:0.331px;">Widok</span>
<span class="t" style="left:813.50px;top:137.84px;font:400 12px/16px 'Liberation Sans', sans-serif;color:#000000;letter-spacing:0.144px;">Import i eksport</span>
<span class="t" style="left:47.80px;top:166.54px;font:400 12px/16px 'Liberation Sans', sans-serif;color:#000000;letter-spacing:0.200px;">Firmy</span>
<span class="t" style="left:1130.20px;top:166.00px;font:400 13px/16px 'Liberation Sans', sans-serif;color:#000000;letter-spacing:-0.093px;">olczak</span>
<span class="t" style="left:30.50px;top:199.69px;font:700 11px/16px 'Liberation Sans', sans-serif;color:#000000;letter-spacing:0.395px;">Foldery</span>
<span class="t" style="left:47.80px;top:227.54px;font:400 12px/16px 'Liberation Sans', sans-serif;color:#000000;letter-spacing:0.200px;">Firmy</span>
<span class="t" style="left:47.80px;top:249.54px;font:400 12px/16px 'Liberation Sans', sans-serif;color:#000000;letter-spacing:0.363px;">Właściciele (osoby fizyczne)</span>
<span class="t" style="left:47.80px;top:271.54px;font:400 12px/16px 'Liberation Sans', sans-serif;color:#000000;letter-spacing:0.505px;">Pozostałe zbiory danych</span>
<span class="t" style="left:47.80px;top:293.54px;font:400 12px/16px 'Liberation Sans', sans-serif;color:#000000;letter-spacing:0.525px;">Pozostałe dokumenty</span>
<span class="t" style="left:47.80px;top:315.54px;font:400 12px/16px 'Liberation Sans', sans-serif;color:#000000;letter-spacing:0.414px;">Wszystkie e-Dokumenty</span>
<span class="t" style="left:47.80px;top:337.54px;font:400 12px/16px 'Liberation Sans', sans-serif;color:#000000;letter-spacing:0.478px;">Dokumenty tekstowe</span>
<span class="t" style="left:47.80px;top:359.54px;font:400 12px/16px 'Liberation Sans', sans-serif;color:#000000;letter-spacing:0.425px;">Pozostałe zadania</span>
<span class="t" style="left:47.80px;top:381.54px;font:400 12px/16px 'Liberation Sans', sans-serif;color:#000000;letter-spacing:0.349px;">Wszystkie zadania</span>
<span class="t" style="left:47.80px;top:403.54px;font:400 12px/16px 'Liberation Sans', sans-serif;color:#000000;letter-spacing:0.502px;">Archiwum</span>
<span class="t" style="left:47.80px;top:425.54px;font:400 12px/16px 'Liberation Sans', sans-serif;color:#000000;letter-spacing:0.763px;">Notatki</span>
<span class="t" style="left:259.70px;top:199.34px;font:400 12px/16px 'Liberation Sans', sans-serif;color:#000000;letter-spacing:0.523px;">Nazwa</span>
<span class="t" style="left:565.90px;top:199.34px;font:400 12px/16px 'Liberation Sans', sans-serif;color:#000000;letter-spacing:0.379px;">Saldo</span>
<span class="t" style="left:610.70px;top:199.34px;font:400 12px/16px 'Liberation Sans', sans-serif;color:#000000;letter-spacing:0.546px;">Biuro prowadzące</span>
<span class="t" style="left:739.90px;top:199.34px;font:400 12px/16px 'Liberation Sans', sans-serif;color:#000000;letter-spacing:0.461px;">Ostatnia faktura</span>
<span class="t" style="left:856.00px;top:199.34px;font:400 12px/16px 'Liberation Sans', sans-serif;color:#000000;letter-spacing:0.400px;">Okres wysłanej faktury</span>
<span class="t" style="left:1008.50px;top:199.34px;font:400 12px/16px 'Liberation Sans', sans-serif;color:#000000;letter-spacing:0.461px;">Klient</span>
<span class="t" style="left:1072.70px;top:199.34px;font:400 12px/16px 'Liberation Sans', sans-serif;color:#000000;letter-spacing:0.368px;">Fakturuj</span>
<span class="t" style="left:1138.40px;top:199.34px;font:400 12px/16px 'Liberation Sans', sans-serif;color:#000000;letter-spacing:0.397px;">Stawka podst...</span>
<span class="t" style="left:280.10px;top:220.64px;font:700 12px/16px 'Liberation Sans', sans-serif;color:#0000f0;letter-spacing:0.411px;">Biuro Rachunkowe Jan Nowak</span>
<span class="t" style="left:280.10px;top:242.64px;font:400 12px/16px 'Liberation Sans', sans-serif;color:#000000;letter-spacing:0.182px;">Kowalski Sp. J.</span>
<span class="t" style="left:280.10px;top:264.64px;font:400 12px/16px 'Liberation Sans', sans-serif;color:#000000;letter-spacing:0.231px;">PHU Kowalski Jan</span>
<span class="t" style="left:280.10px;top:286.64px;font:400 12px/16px 'Liberation Sans', sans-serif;color:#000000;letter-spacing:0.246px;">Sklep Spożywczy Kowalska Janina</span>
<span class="t" style="left:576.10px;top:220.64px;font:400 12px/16px 'Liberation Sans', sans-serif;color:#000000;letter-spacing:0.160px;">0,00</span>
<span class="t" style="left:560.80px;top:242.64px;font:700 12px/16px 'Liberation Sans', sans-serif;color:#ff0000;letter-spacing:0.433px;">644,50</span>
<span class="t" style="left:612.80px;top:242.64px;font:400 12px/16px 'Liberation Sans', sans-serif;color:#000000;letter-spacing:0.624px;">Biuro Nowak</span>
<span class="t" style="left:755.70px;top:242.64px;font:400 12px/16px 'Liberation Sans', sans-serif;color:#000000;letter-spacing:0.441px;">2021-01-31</span>
<span class="t" style="left:897.70px;top:242.64px;font:400 12px/16px 'Liberation Sans', sans-serif;color:#000000;letter-spacing:0.365px;">2021-01</span>
<span class="t" style="left:1018.90px;top:242.64px;font:400 12px/16px 'Liberation Sans', sans-serif;color:#000000;letter-spacing:0.304px;">Tak</span>
<span class="t" style="left:1089.00px;top:242.64px;font:400 12px/16px 'Liberation Sans', sans-serif;color:#000000;letter-spacing:0.371px;">Tak</span>
<span class="t" style="left:560.80px;top:264.64px;font:700 12px/16px 'Liberation Sans', sans-serif;color:#ff0000;letter-spacing:0.433px;">933,20</span>
<span class="t" style="left:612.80px;top:264.64px;font:400 12px/16px 'Liberation Sans', sans-serif;color:#000000;letter-spacing:0.624px;">Biuro Nowak</span>
<span class="t" style="left:755.70px;top:264.64px;font:400 12px/16px 'Liberation Sans', sans-serif;color:#000000;letter-spacing:0.441px;">2021-01-31</span>
<span class="t" style="left:897.70px;top:264.64px;font:400 12px/16px 'Liberation Sans', sans-serif;color:#000000;letter-spacing:0.365px;">2021-01</span>
<span class="t" style="left:1018.90px;top:264.64px;font:400 12px/16px 'Liberation Sans', sans-serif;color:#000000;letter-spacing:0.304px;">Tak</span>
<span class="t" style="left:1089.00px;top:264.64px;font:400 12px/16px 'Liberation Sans', sans-serif;color:#000000;letter-spacing:0.371px;">Tak</span>
<span class="t" style="left:560.80px;top:286.64px;font:700 12px/16px 'Liberation Sans', sans-serif;color:#ff0000;letter-spacing:0.433px;">738,00</span>
<span class="t" style="left:612.80px;top:286.64px;font:400 12px/16px 'Liberation Sans', sans-serif;color:#000000;letter-spacing:0.624px;">Biuro Nowak</span>
<span class="t" style="left:755.70px;top:286.64px;font:400 12px/16px 'Liberation Sans', sans-serif;color:#000000;letter-spacing:0.441px;">2021-01-31</span>
<span class="t" style="left:897.70px;top:286.64px;font:400 12px/16px 'Liberation Sans', sans-serif;color:#000000;letter-spacing:0.365px;">2021-01</span>
<span class="t" style="left:1018.90px;top:286.64px;font:400 12px/16px 'Liberation Sans', sans-serif;color:#000000;letter-spacing:0.304px;">Tak</span>
<span class="t" style="left:1089.00px;top:286.64px;font:400 12px/16px 'Liberation Sans', sans-serif;color:#000000;letter-spacing:0.371px;">Tak</span>
<span class="t" style="left:1017.80px;top:220.64px;font:400 12px/16px 'Liberation Sans', sans-serif;color:#000000;letter-spacing:0.728px;">Nie</span>
<span class="t" style="left:1088.10px;top:220.64px;font:400 12px/16px 'Liberation Sans', sans-serif;color:#000000;letter-spacing:0.661px;">Nie</span>
<span class="t" style="left:1202.50px;top:220.64px;font:400 12px/16px 'Liberation Sans', sans-serif;color:#000000;letter-spacing:0.310px;">0,00</span>
<span class="t" style="left:1188.70px;top:242.64px;font:400 12px/16px 'Liberation Sans', sans-serif;color:#000000;letter-spacing:0.283px;">400,00</span>
<span class="t" style="left:1188.70px;top:264.64px;font:400 12px/16px 'Liberation Sans', sans-serif;color:#000000;letter-spacing:0.283px;">300,00</span>
<span class="t" style="left:1188.70px;top:286.64px;font:400 12px/16px 'Liberation Sans', sans-serif;color:#000000;letter-spacing:0.283px;">350,00</span>
<span class="t" style="left:3.50px;top:582.79px;font:400 11px/16px 'Liberation Sans', sans-serif;color:#000000;letter-spacing:0.991px;">Obiektów: 4</span>
<span class="t" style="left:119.50px;top:582.79px;font:400 11px/16px 'Liberation Sans', sans-serif;color:#000000;letter-spacing:0.701px;">Licencja dla: NEONET CONSULTING S.C.</span>
<span class="t" style="left:503.50px;top:582.79px;font:400 11px/16px 'Liberation Sans', sans-serif;color:#000000;letter-spacing:0.933px;">taxmachine.pl</span>
<span class="t" style="left:670.30px;top:582.79px;font:400 11px/16px 'Liberation Sans', sans-serif;color:#000000;letter-spacing:0.700px;">3.9.2.3559</span>
<span class="t" style="left:777.50px;top:582.79px;font:400 11px/16px 'Liberation Sans', sans-serif;color:#000000;letter-spacing:0.663px;">Baza SQLite: LocalDB.db</span>
<span class="t" style="left:1012.80px;top:582.79px;font:400 11px/16px 'Liberation Sans', sans-serif;color:#000000;letter-spacing:0.915px;">Aktualizacje do 2222-03-07</span>
<span class="t" style="left:1270.00px;top:221.00px;font:400 11px/16px 'Liberation Sans', sans-serif;color:#15153a;letter-spacing:-0.108px;transform-origin:0 0;transform:rotate(90deg);">Filtrowanie</span>
</div></body></html>
